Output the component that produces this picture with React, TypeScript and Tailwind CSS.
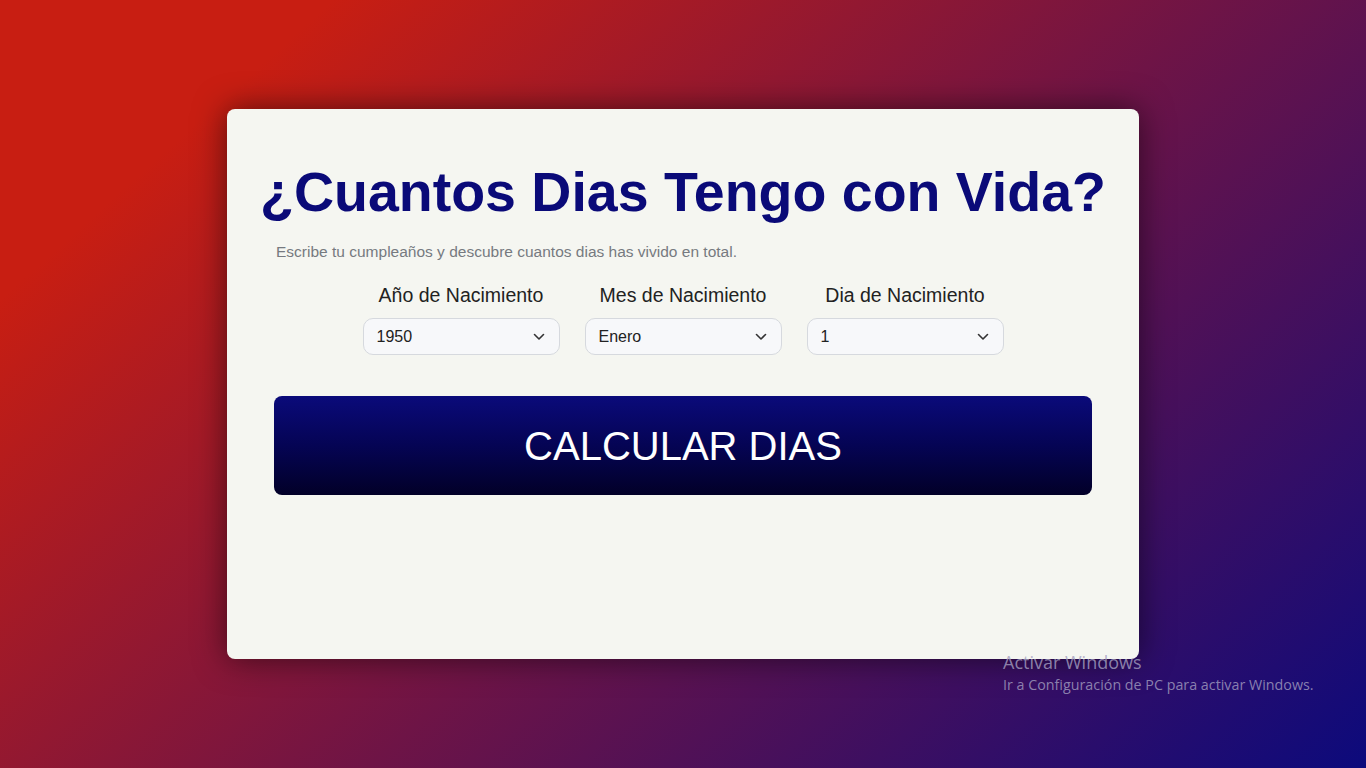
import { useState } from "react";

interface FieldProps {
  label: string;
  value: string;
  options: string[];
  onChange: (v: string) => void;
}

const years = Array.from({ length: 76 }, (_, i) => String(1950 + i));
const months = [
  "Enero",
  "Febrero",
  "Marzo",
  "Abril",
  "Mayo",
  "Junio",
  "Julio",
  "Agosto",
  "Septiembre",
  "Octubre",
  "Noviembre",
  "Diciembre",
];
const days = Array.from({ length: 31 }, (_, i) => String(i + 1));

const Field: React.FC<FieldProps> = ({ label, value, options, onChange }) => {
  return (
    <div className="w-[197px] flex flex-col items-center gap-[11px]">
      <label className="text-[19.5px] leading-[24px] text-[#222222]">
        {label}
      </label>
      <div className="relative w-full">
        <select
          value={value}
          onChange={(e) => onChange(e.target.value)}
          className="appearance-none w-full h-[37px] pl-[13px] pr-8 rounded-[10px] border border-[#d6d9de] bg-[#f7f8fa] text-[16px] text-[#222222] outline-none"
        >
          {options.map((o) => (
            <option key={o} value={o}>
              {o}
            </option>
          ))}
        </select>
        <svg
          width="12"
          height="8"
          viewBox="0 0 12 8"
          className="pointer-events-none absolute right-[15px] top-[15px]"
        >
          <path
            d="M1.5 1.5 L6 6 L10.5 1.5"
            fill="none"
            stroke="#333"
            strokeWidth="1.6"
            strokeLinecap="round"
            strokeLinejoin="round"
          />
        </svg>
      </div>
    </div>
  );
};

export default function App() {
  const [year, setYear] = useState("1950");
  const [month, setMonth] = useState("Enero");
  const [day, setDay] = useState("1");

  return (
    <div className="relative min-h-screen w-full overflow-hidden pt-[109px] font-['Liberation_Sans',Arial,sans-serif] bg-[linear-gradient(138deg,#c81e12_15%,#6e1446_55%,#0c0a7c_100%)]">
      <div className="mx-auto w-[912px] h-[550px] rounded-[8px] bg-[#f5f6f1] shadow-[0_0_32px_rgba(0,0,0,0.55)] px-[47px] pt-[52px]">
        <h1 className="-mx-[30px] whitespace-nowrap text-center text-[55.5px] leading-[62px] font-bold text-[#0a0a78]">
          ¿Cuantos Dias Tengo con Vida?
        </h1>
        <p className="mt-[17px] ml-[2px] text-[15.5px] leading-[24px] text-[#767a80]">
          Escribe tu cumpleaños y descubre cuantos dias has vivido en total.
        </p>

        <div className="mt-[19px] flex justify-center gap-[25px]">
          <Field
            label="Año de Nacimiento"
            value={year}
            options={years}
            onChange={setYear}
          />
          <Field
            label="Mes de Nacimiento"
            value={month}
            options={months}
            onChange={setMonth}
          />
          <Field
            label="Dia de Nacimiento"
            value={day}
            options={days}
            onChange={setDay}
          />
        </div>

        <button className="mt-[41px] w-full h-[99px] rounded-[8px] bg-[linear-gradient(180deg,#0a0a7a_0%,#050454_50%,#020028_100%)] text-white text-[40px] leading-none">
          CALCULAR DIAS
        </button>
      </div>

      <div className="absolute left-[1003px] top-[650px] text-[#a49fc0]/80 font-['Open_Sans','Noto_Sans',sans-serif]">
        <p className="text-[18px] leading-[24px]">Activar Windows</p>
        <p className="text-[14.3px] leading-[22px]">
          Ir a Configuración de PC para activar Windows.
        </p>
      </div>
    </div>
  );
}
